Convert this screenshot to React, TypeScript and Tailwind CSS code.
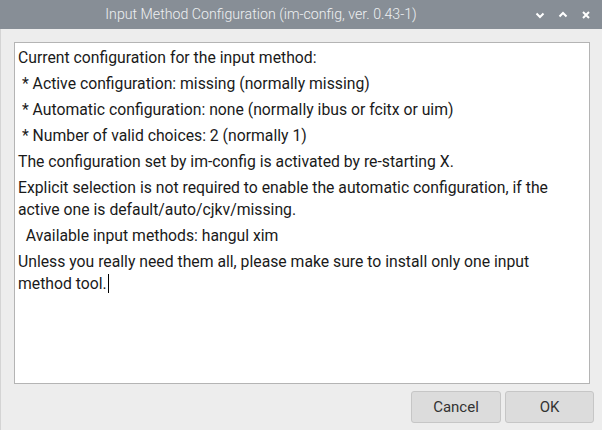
import React from "react";

const lines: string[] = [
  "Current configuration for the input method:",
  " * Active configuration: missing (normally missing)",
  " * Automatic configuration: none (normally ibus or fcitx or uim)",
  " * Number of valid choices: 2 (normally 1)",
  "The configuration set by im-config is activated by re-starting X.",
  "Explicit selection is not required to enable the automatic configuration, if the active one is default/auto/cjkv/missing.",
  "  Available input methods: hangul xim",
];

export default function App() {
  return (
    <div
      className="flex h-[430px] w-[602px] flex-col overflow-hidden bg-[#ededed]"
      style={{ fontFamily: "Roboto, 'Liberation Sans', sans-serif" }}
    >
      {/* title bar */}
      <div className="relative flex h-[29px] shrink-0 items-center bg-[#878e96]">
        <div className="w-[522px] pt-[1px] text-center text-[14.2px] font-light text-[#eef0f2]">
          Input Method Configuration (im-config, ver. 0.43-1)
        </div>
        <div className="flex items-center gap-[13px] pl-[13px]">
          <svg width="10" height="10" viewBox="0 0 10 10">
            <path d="M1.5 3.5 L5 7 L8.5 3.5" stroke="#ffffff" strokeWidth="2" fill="none" />
          </svg>
          <svg width="10" height="10" viewBox="0 0 10 10">
            <path d="M1.5 6.5 L5 3 L8.5 6.5" stroke="#ffffff" strokeWidth="2" fill="none" />
          </svg>
          <svg width="10" height="10" viewBox="0 0 10 10">
            <path d="M2 2 L8 8 M8 2 L2 8" stroke="#ffffff" strokeWidth="2" fill="none" />
          </svg>
        </div>
      </div>

      {/* body */}
      <div className="flex flex-1 flex-col border-l border-[#d4d4d4] pl-[13px] pr-[12px] pt-[13px]">
        <div className="h-[342px] border border-[#b4b4b4] bg-white px-[3px] pt-[4px] text-[15.75px] leading-[22px] text-[#1a1a1a]">
          {lines.map((l, i) => (
            <p key={i} className="mb-[4px] whitespace-pre-wrap">
              {l}
            </p>
          ))}
          <p className="whitespace-pre-wrap">
            Unless you really need them all, please make sure to install only one input method tool.
            <span className="ml-[1px] inline-block h-[19px] w-px bg-black align-[-4px]" />
          </p>
        </div>

        <div className="mr-[-4px] mt-[7px] flex justify-end gap-[4px]">
          <button className="h-[32px] w-[90px] rounded-[3px] border border-[#c6c6c6] bg-[#dcdcdc] text-[15px] text-[#333333]">
            Cancel
          </button>
          <button className="h-[32px] w-[89px] rounded-[3px] border border-[#c6c6c6] bg-[#dcdcdc] text-[15px] text-[#333333]">
            OK
          </button>
        </div>
      </div>
    </div>
  );
}
